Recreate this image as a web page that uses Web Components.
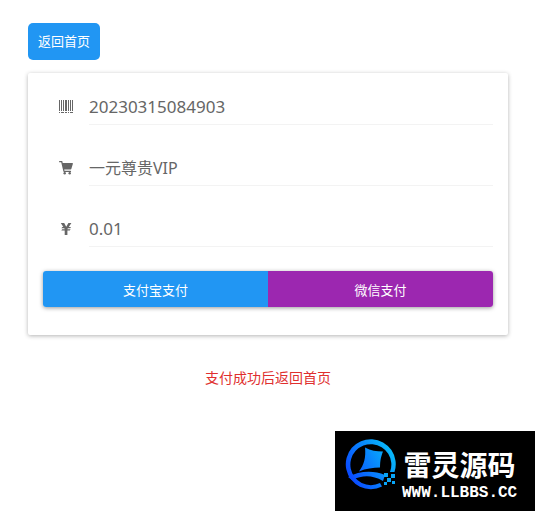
<!DOCTYPE html>
<html lang="zh-CN">
<head>
<meta charset="UTF-8">
<meta name="viewport" content="width=device-width, initial-scale=1">
<title>支付</title>
<style>
    body{margin: 0;background: #fff;font-family: "Noto Sans","Noto Sans CJK SC",sans-serif;color: #666;}
</style>
</head>
<body>

<pay-page>
    <home-link slot="top" href="#">返回首页</home-link>
    <pay-card>
        <pay-field label="订单号" value="20230315084903" numeric>
            <svg viewBox="0 0 14 14" fill="currentColor"><path d="M0 0h1v11H0zM2 0h1v11H2zM4 0h1v11H4zM6 0h2v11H6zM9 0h1v11H9zM11 0h1v11h-1zM13 0h1v11h-1zM0 12h1v1H0zM2 12h3v1H2zM6 12h2v1H6zM9 12h1v1H9zM11 12h3v1h-3z"/></svg>
        </pay-field>
        <pay-field label="商品" value="一元尊贵VIP">
            <svg viewBox="0 0 14 14" fill="currentColor"><path d="M.6 0h2.200c.3 0 .5.1.6.4L3.700 2h9.700c.4 0 .6.300.5.700l-1.600 5.400c-.1.300-.3.400-.6.400H5.200l.3 1.300h6c.8 0 .8 1.200 0 1.200H5c-.3 0-.5-.1-.6-.4L2.200 1.300H.6C-.2 1.300-.2 0 .6 0z"/><circle cx="5.700" cy="12.200" r="1.200"/><circle cx="10.700" cy="12.200" r="1.200"/></svg>
        </pay-field>
        <pay-field label="金额" value="0.01" numeric>
            <svg viewBox="0 0 14 14" fill="currentColor"><path d="M1.800 1h3.400l2 3.800L9.400 1h3L9.800 5h2.200l-.8 1.300H8.800l-.4.9h3.200l-.8 1.300H8.400V13H5.700V8.500H2.300l.9-1.300h2.500l-.4-.9H2.400L3.300 5h1z"/></svg>
        </pay-field>
        <pay-buttons slot="actions"></pay-buttons>
    </pay-card>
    <span slot="tip">支付成功后返回首页</span>
    <site-mark slot="mark"></site-mark>
</pay-page>

<template id="pay-page">
    <style>
        :host{display: flex;flex-direction: column;min-height: 100vh;}
        main{padding: 23px 27px 0 28px;}
        .tip{margin: 32px 0 24px;font-size: 14px;line-height: 22px;text-align: center;color: #e02f2f;}
        .mark{display: flex;justify-content: flex-end;margin-top: auto;}
    </style>
    <main>
        <slot name="top"></slot>
        <slot></slot>
        <p class="tip"><slot name="tip"></slot></p>
    </main>
    <div class="mark"><slot name="mark"></slot></div>
</template>

<template id="home-link">
    <style>
        :host{display: flex;margin-bottom: 13px;}
        a{padding: 8px 10px;border-radius: 5px;background: #2196f3;color: #fff;font-size: 13px;line-height: 21px;text-decoration: none;}
    </style>
    <a><slot></slot></a>
</template>

<template id="pay-card">
    <style>
        :host{display: block;padding: 15px 15px 28px;border-radius: 2px;background: #fff;box-shadow: 0 1px 4px rgba(0,0,0,.3);}
        .fields{display: flex;flex-direction: column;gap: 24px;margin-bottom: 24px;}
    </style>
    <div class="fields"><slot></slot></div>
    <slot name="actions"></slot>
</template>

<template id="pay-field">
    <style>
        :host{display: flex;align-items: center;}
        label{display: flex;justify-content: center;flex: 0 0 46px;}
        ::slotted(svg){display: block;width: 14px;height: 14px;}
        input{flex: 1;min-width: 0;box-sizing: border-box;height: 37px;padding: 0;border: 0;border-bottom: 1px solid #f3f3f3;outline: 0;background: none;color: inherit;font-family: inherit;font-size: 16px;}
        :host([numeric]) input{font-size: 17px;}
    </style>
    <label for="value"><slot></slot></label>
    <input id="value" type="text" readonly>
</template>

<template id="pay-buttons">
    <style>
        :host{display: flex;border-radius: 3px;box-shadow: 0 1px 4px rgba(0,0,0,.4);}
        button{flex: 1;height: 36px;padding: 0;border: 0;color: #fff;font-family: inherit;font-size: 13px;cursor: pointer;}
        .alipay{border-radius: 3px 0 0 3px;background: #2196f3;}
        .wechat{border-radius: 0 3px 3px 0;background: #9c27b0;}
    </style>
    <button type="button" class="alipay">支付宝支付</button>
    <button type="button" class="wechat">微信支付</button>
</template>

<template id="site-mark">
    <style>
        :host{display: flex;align-items: flex-start;gap: 4px;box-sizing: border-box;width: 200px;height: 80px;padding: 7px 0 0 9px;background: #000;color: #fff;}
        svg{display: block;flex: none;width: 54px;height: 54px;}
        div{display: flex;flex-direction: column;align-items: center;padding-top: 8px;}
        .name{font-size: 28px;line-height: 38px;font-weight: bold;white-space: nowrap;}
        .site{font-family: "Liberation Mono",monospace;font-size: 16px;line-height: 18px;font-weight: bold;}
    </style>
    <svg viewBox="0 0 54 54">
        <defs>
            <linearGradient id="blue" gradientUnits="userSpaceOnUse" x1="4" y1="40" x2="48" y2="14">
                <stop offset="0" stop-color="#0a45ff"/>
                <stop offset="1" stop-color="#08b8fa"/>
            </linearGradient>
        </defs>
        <g fill="url(#blue)">
            <path d="M38 48.500A25 25 0 1 1 50.500 34H46A20.500 20.500 0 1 0 36 45z"/>
            <path d="M21 9.500c6 3 11 4 18 4-2 5-3 9-3 16-7 0-14 1-21 4 5-7 7-14 6-24z"/>
            <path d="M4 39c11-6 25-7 37-2l-2 6c-11-6-20-6-31-1z"/>
        </g>
        <path fill="#08a5f8" d="M40 35h4v4h-4zM47 36h4v4h-4zM43 40h4v4h-4zM40 44h3v3h-3zM48 43h3v3h-3z"/>
    </svg>
    <div>
        <span class="name">雷灵源码</span>
        <span class="site">WWW.LLBBS.CC</span>
    </div>
</template>

<script>
class PayElement extends HTMLElement {
    constructor() {
        super();
        this.attachShadow({ mode: 'open' });
        const template = document.getElementById(this.localName);
        this.shadowRoot.appendChild(template.content.cloneNode(true));
    }
}

class PayPage extends PayElement {}
class PayCard extends PayElement {}
class PayButtons extends PayElement {}
class SiteMark extends PayElement {}

class HomeLink extends PayElement {
    connectedCallback() {
        this.shadowRoot.querySelector('a').href = this.getAttribute('href');
    }
}

class PayField extends PayElement {
    connectedCallback() {
        const input = this.shadowRoot.querySelector('input');
        input.value = this.getAttribute('value');
        input.setAttribute('aria-label', this.getAttribute('label'));
    }
}

customElements.define('pay-page', PayPage);
customElements.define('home-link', HomeLink);
customElements.define('pay-card', PayCard);
customElements.define('pay-field', PayField);
customElements.define('pay-buttons', PayButtons);
customElements.define('site-mark', SiteMark);
</script>
</body>
</html>
